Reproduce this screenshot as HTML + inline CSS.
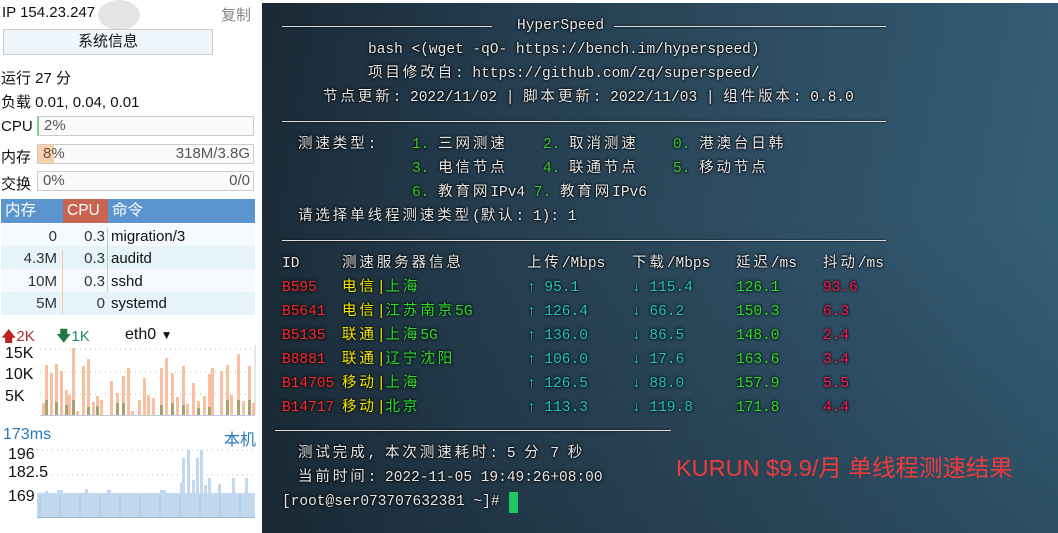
<!DOCTYPE html>
<html><head><meta charset="utf-8"><style>
*{margin:0;padding:0;box-sizing:border-box}
body{width:1058px;height:533px;overflow:hidden;background:#fff;position:relative;font-family:"Liberation Sans","Noto Sans CJK SC",sans-serif;font-size:15px;color:#111}
.a{position:absolute;white-space:nowrap}
#term{position:absolute;left:262px;top:3px;width:796px;height:530px;overflow:hidden;
background:linear-gradient(180deg,rgba(0,0,0,0) 40%,rgba(0,0,0,.18) 100%),linear-gradient(100deg,#1a2935 0%,#253e50 30%,#2d4b5f 55%,#35607a 100%)}
#term .a{font-family:"Liberation Mono","Noto Sans CJK SC",monospace;font-size:14.5px;color:#e6e6e6;text-shadow:0 0 2px #000,0 0 3px #000;line-height:20px}
.c{letter-spacing:2.9px}
.r{color:#ff2a2a!important}.y{color:#f5e800!important}.g{color:#2ee02e!important}.t{color:#1ec8c8!important}.m{color:#ff1a55!important}
.g2{color:#33d133}
.sep{position:absolute;left:20px;width:604px;height:1px;background:#ddd;box-shadow:0 0 2px #000}
.bar{position:absolute;left:37px;width:217px;height:20px;border:1px solid #ccc;background:#fafafa;font-size:15px;color:#555;line-height:18px;padding-left:5px}
</style></head><body>
<div class="a" style="left:2px;top:4px">IP 154.23.247</div>
<div class="a" style="left:98px;top:0;width:42px;height:30px;border-radius:50%;background:#e4e4e4"></div>
<div class="a" style="left:221px;top:4px;color:#888">复制</div>
<div class="a" style="left:3px;top:29px;width:210px;height:26px;background:#eef6fc;border:1px solid #ccc;text-align:center;line-height:24px">系统信息</div>
<div class="a" style="left:1px;top:67px">运行 27 分</div>
<div class="a" style="left:1px;top:91px">负载 0.01, 0.04, 0.01</div>
<div class="a" style="left:1px;top:118px">CPU</div>
<div class="bar" style="top:116px;border-left:2px solid #8c8">2%</div>
<div class="a" style="left:1px;top:146px">内存</div>
<div class="bar" style="top:144px"><span style="position:absolute;left:0;top:0;width:16px;height:18px;background:#fbcfa8"></span><span style="position:relative">8%</span><span style="position:absolute;right:3px">318M/3.8G</span></div>
<div class="a" style="left:1px;top:173px">交换</div>
<div class="bar" style="top:171px">0%<span style="position:absolute;right:3px">0/0</span></div>
<div class="a" style="left:1px;top:199px;width:254px;height:24px;background:#5b95d0"></div>
<div class="a" style="left:63px;top:199px;width:45px;height:24px;background:#c86452"></div>
<div class="a" style="left:5px;top:201px;color:#fff;font-size:15.5px;line-height:20px">内存</div>
<div class="a" style="left:67px;top:201px;color:#fff;font-size:15.5px;line-height:20px">CPU</div>
<div class="a" style="left:112px;top:201px;color:#fff;font-size:15.5px;line-height:20px">命令</div>
<div class="a" style="left:1px;top:224px;width:254px;height:22px;background:#f4fafd"></div>
<div class="a" style="left:1px;top:246px;width:254px;height:23px;background:#e6f3f9"></div>
<div class="a" style="left:1px;top:269px;width:254px;height:23px;background:#f4fafd"></div>
<div class="a" style="left:1px;top:292px;width:254px;height:23px;background:#e6f3f9"></div>
<div class="a" style="left:62px;top:250px;width:1px;height:64px;background:#f5c8a0"></div>
<div class="a" style="left:107px;top:228px;width:1px;height:64px;background:#a8d8a8"></div>
<div class="a" style="left:0;top:228px;width:57px;text-align:right;color:#333">0</div>
<div class="a" style="left:0;top:250px;width:57px;text-align:right;color:#333">4.3M</div>
<div class="a" style="left:0;top:273px;width:57px;text-align:right;color:#333">10M</div>
<div class="a" style="left:0;top:295px;width:57px;text-align:right;color:#333">5M</div>
<div class="a" style="left:60px;top:228px;width:45px;text-align:right;color:#333">0.3</div>
<div class="a" style="left:60px;top:250px;width:45px;text-align:right;color:#333">0.3</div>
<div class="a" style="left:60px;top:273px;width:45px;text-align:right;color:#333">0.3</div>
<div class="a" style="left:60px;top:295px;width:45px;text-align:right;color:#333">0</div>
<div class="a" style="left:111px;top:228px">migration/3</div>
<div class="a" style="left:111px;top:250px">auditd</div>
<div class="a" style="left:111px;top:273px">sshd</div>
<div class="a" style="left:111px;top:295px">systemd</div>
<div class="a" style="left:1px;top:326px;color:#a33"><span style="color:#b22">&#129093;</span>2K</div>
<div class="a" style="left:56px;top:326px;color:#286"><span style="color:#274">&#129095;</span>1K</div>
<div class="a" style="left:125px;top:326px;font-size:16px">eth0 <span style="font-size:12px">&#9660;</span></div>
<svg class="a" style="left:0;top:340px" width="262" height="80">
<g stroke="#bbb" stroke-dasharray="1,4"><line x1="40" y1="9" x2="255" y2="9"/><line x1="40" y1="32" x2="255" y2="32"/><line x1="40" y1="54" x2="255" y2="54"/></g>
<line x1="255" y1="5" x2="255" y2="75" stroke="#ccc"/><line x1="40" y1="75.5" x2="255" y2="75.5" stroke="#bcd"/>
<g fill="#f8c0a0">
<rect x="42" y="63" width="3" height="12"/><rect x="45" y="25" width="3" height="50"/><rect x="50" y="33" width="3" height="42"/><rect x="55" y="24" width="3" height="51"/><rect x="60" y="31" width="3" height="44"/><rect x="65" y="50" width="3" height="25"/><rect x="68" y="55" width="3" height="20"/><rect x="72" y="8" width="3" height="67"/><rect x="76" y="71" width="3" height="4"/><rect x="82" y="26" width="3" height="49"/><rect x="87" y="19" width="3" height="56"/><rect x="92" y="62" width="3" height="13"/><rect x="96" y="56" width="3" height="19"/><rect x="100" y="60" width="3" height="15"/><rect x="110" y="41" width="3" height="34"/><rect x="116" y="53" width="3" height="22"/><rect x="122" y="36" width="3" height="39"/><rect x="127" y="28" width="3" height="47"/><rect x="131" y="71" width="3" height="4"/><rect x="138" y="60" width="3" height="15"/><rect x="143" y="38" width="3" height="37"/><rect x="147" y="55" width="3" height="20"/><rect x="152" y="58" width="3" height="17"/><rect x="160" y="28" width="3" height="47"/><rect x="165" y="18" width="3" height="57"/><rect x="171" y="33" width="3" height="42"/><rect x="176" y="57" width="3" height="18"/><rect x="182" y="26" width="3" height="49"/><rect x="186" y="64" width="3" height="11"/><rect x="192" y="43" width="3" height="32"/><rect x="197" y="61" width="3" height="14"/><rect x="203" y="56" width="3" height="19"/><rect x="208" y="34" width="3" height="41"/><rect x="211" y="28" width="3" height="47"/><rect x="220" y="31" width="3" height="44"/><rect x="226" y="25" width="3" height="50"/><rect x="230" y="55" width="3" height="20"/><rect x="237" y="14" width="3" height="61"/><rect x="242" y="61" width="3" height="14"/><rect x="248" y="26" width="3" height="49"/><rect x="252" y="63" width="3" height="12"/>
</g>
<g fill="#a9a070"><rect x="45" y="60" width="3" height="15"/><rect x="55" y="62" width="3" height="13"/><rect x="65" y="65" width="3" height="10"/><rect x="72" y="60" width="3" height="15"/><rect x="87" y="67" width="3" height="8"/><rect x="96" y="66" width="3" height="9"/><rect x="116" y="63" width="3" height="12"/><rect x="122" y="63" width="3" height="12"/><rect x="160" y="65" width="3" height="10"/><rect x="171" y="63" width="3" height="12"/><rect x="182" y="65" width="3" height="10"/><rect x="197" y="68" width="3" height="7"/><rect x="208" y="67" width="3" height="8"/><rect x="226" y="60" width="3" height="15"/><rect x="237" y="60" width="3" height="15"/><rect x="248" y="60" width="3" height="15"/></g>
</svg>
<div class="a" style="left:5px;top:345px;font-size:16px">15K</div>
<div class="a" style="left:5px;top:366px;font-size:16px">10K</div>
<div class="a" style="left:5px;top:388px;font-size:16px">5K</div>
<div class="a" style="left:3px;top:426px;color:#2a78b8;font-size:16px">173ms</div>
<div class="a" style="left:224px;top:426px;color:#2a78b8;font-size:16px">本机</div>
<svg class="a" style="left:0;top:440px" width="262" height="82">
<g stroke="#bbb" stroke-dasharray="1,4"><line x1="37" y1="10" x2="255" y2="10"/><line x1="37" y1="35" x2="255" y2="35"/><line x1="37" y1="58" x2="255" y2="58"/></g>
<rect x="37" y="53" width="218" height="24" fill="#c2d8ee"/>
<g fill="#c2d8ee"><rect x="45" y="51" width="3" height="4"/><rect x="57" y="50" width="6" height="4"/><rect x="85" y="49" width="3" height="4"/><rect x="107" y="50" width="4" height="4"/><rect x="160" y="50" width="6" height="4"/><rect x="182" y="18" width="3" height="40"/><rect x="187" y="10" width="3" height="48"/><rect x="192" y="40" width="3" height="18"/><rect x="196" y="18" width="3" height="40"/><rect x="200" y="10" width="3" height="48"/><rect x="204" y="45" width="3" height="13"/><rect x="208" y="38" width="3" height="20"/><rect x="218" y="44" width="3" height="14"/><rect x="232" y="38" width="3" height="20"/><rect x="245" y="38" width="3" height="20"/><rect x="180" y="43" width="3" height="15"/></g>
<g stroke="#a8c6e6" stroke-width="1"><line x1="40" y1="55" x2="40" y2="77"/><line x1="60" y1="55" x2="60" y2="77"/><line x1="80" y1="55" x2="80" y2="77"/><line x1="100" y1="55" x2="100" y2="77"/><line x1="120" y1="55" x2="120" y2="77"/><line x1="140" y1="55" x2="140" y2="77"/><line x1="160" y1="55" x2="160" y2="77"/><line x1="180" y1="55" x2="180" y2="77"/><line x1="200" y1="55" x2="200" y2="77"/><line x1="220" y1="55" x2="220" y2="77"/><line x1="240" y1="55" x2="240" y2="77"/></g>
<line x1="37" y1="77.5" x2="255" y2="77.5" stroke="#9bb"/>
</svg>
<div class="a" style="left:8px;top:446px;font-size:16px;color:#111">196</div>
<div class="a" style="left:8px;top:464px;font-size:16px">182.5</div>
<div class="a" style="left:8px;top:488px;font-size:16px">169</div>

<div id="term">
<div class="sep" style="top:23px;width:210px"></div>
<div class="a" style="left:255px;top:13px">HyperSpeed</div>
<div class="sep" style="top:23px;left:352px;width:272px"></div>
<div class="a" style="left:106px;top:37px">bash &lt;(wget -qO- https://bench.im/hyperspeed)</div>
<div class="a" style="left:106px;top:61px"><span class="c">项目修改自</span>: https://github.com/zq/superspeed/</div>
<div class="a" style="left:61px;top:85px"><span class="c">节点更新</span>: 2022/11/02 | <span class="c">脚本更新</span>: 2022/11/03 | <span class="c">组件版本</span>: 0.8.0</div>
<div class="sep" style="top:118px"></div>
<div class="a" style="left:36px;top:132px"><span class="c">测速类型</span>:</div>
<div class="a" style="left:150px;top:132px"><span class="g2">1.</span> <span class="c">三网测速</span></div>
<div class="a" style="left:281px;top:132px"><span class="g2">2.</span> <span class="c">取消测速</span></div>
<div class="a" style="left:411px;top:132px"><span class="g2">0.</span> <span class="c">港澳台日韩</span></div>
<div class="a" style="left:150px;top:156px"><span class="g2">3.</span> <span class="c">电信节点</span></div>
<div class="a" style="left:281px;top:156px"><span class="g2">4.</span> <span class="c">联通节点</span></div>
<div class="a" style="left:411px;top:156px"><span class="g2">5.</span> <span class="c">移动节点</span></div>
<div class="a" style="left:150px;top:180px"><span class="g2">6.</span> <span class="c">教育网</span>IPv4 <span class="g2">7.</span> <span class="c">教育网</span>IPv6</div>
<div class="a" style="left:36px;top:204px"><span class="c">请选择单线程测速类型</span>(<span class="c">默认</span>: 1): 1</div>
<div class="sep" style="top:237px"></div>
<div class="a" style="left:20px;top:251px">ID</div>
<div class="a" style="left:80px;top:251px"><span class="c">测速服务器信息</span></div>
<div class="a" style="left:265px;top:251px"><span class="c">上传</span>/Mbps</div>
<div class="a" style="left:370px;top:251px"><span class="c">下载</span>/Mbps</div>
<div class="a" style="left:474px;top:251px"><span class="c">延迟</span>/ms</div>
<div class="a" style="left:561px;top:251px"><span class="c">抖动</span>/ms</div>

<div class="a r" style="left:20px;top:275px">B595</div><div class="a" style="left:80px;top:275px"><span class="y c">电信</span><span class="y">|</span><span class="g c">上海</span></div><div class="a t" style="left:265px;top:275px">↑ 95.1</div><div class="a t" style="left:370px;top:275px">↓ 115.4</div><div class="a g" style="left:474px;top:275px">126.1</div><div class="a m" style="left:561px;top:275px">93.6</div>
<div class="a r" style="left:20px;top:299px">B5641</div><div class="a" style="left:80px;top:299px"><span class="y c">电信</span><span class="y">|</span><span class="g c">江苏南京</span><span class="g">5G</span></div><div class="a t" style="left:265px;top:299px">↑ 126.4</div><div class="a t" style="left:370px;top:299px">↓ 66.2</div><div class="a g" style="left:474px;top:299px">150.3</div><div class="a m" style="left:561px;top:299px">6.3</div>
<div class="a r" style="left:20px;top:323px">B5135</div><div class="a" style="left:80px;top:323px"><span class="y c">联通</span><span class="y">|</span><span class="g c">上海</span><span class="g">5G</span></div><div class="a t" style="left:265px;top:323px">↑ 136.0</div><div class="a t" style="left:370px;top:323px">↓ 86.5</div><div class="a g" style="left:474px;top:323px">148.0</div><div class="a m" style="left:561px;top:323px">2.4</div>
<div class="a r" style="left:20px;top:347px">B8881</div><div class="a" style="left:80px;top:347px"><span class="y c">联通</span><span class="y">|</span><span class="g c">辽宁沈阳</span></div><div class="a t" style="left:265px;top:347px">↑ 106.0</div><div class="a t" style="left:370px;top:347px">↓ 17.6</div><div class="a g" style="left:474px;top:347px">163.6</div><div class="a m" style="left:561px;top:347px">3.4</div>
<div class="a r" style="left:20px;top:371px">B14705</div><div class="a" style="left:80px;top:371px"><span class="y c">移动</span><span class="y">|</span><span class="g c">上海</span></div><div class="a t" style="left:265px;top:371px">↑ 126.5</div><div class="a t" style="left:370px;top:371px">↓ 88.0</div><div class="a g" style="left:474px;top:371px">157.9</div><div class="a m" style="left:561px;top:371px">5.5</div>
<div class="a r" style="left:20px;top:395px">B14717</div><div class="a" style="left:80px;top:395px"><span class="y c">移动</span><span class="y">|</span><span class="g c">北京</span></div><div class="a t" style="left:265px;top:395px">↑ 113.3</div><div class="a t" style="left:370px;top:395px">↓ 119.8</div><div class="a g" style="left:474px;top:395px">171.8</div><div class="a m" style="left:561px;top:395px">4.4</div>
<div class="sep" style="top:427px;left:13px;width:396px"></div>
<div class="a" style="left:36px;top:441px"><span class="c">测试完成</span>, <span class="c">本次测速耗时</span>: 5 <span class="c">分</span> 7 <span class="c">秒</span></div>
<div class="a" style="left:36px;top:465px"><span class="c">当前时间</span>: 2022-11-05 19:49:26+08:00</div>
<div class="a" style="left:20px;top:489px">[root@ser073707632381 ~]#</div>
<div class="a" style="left:247px;top:489px;width:9px;height:21px;background:#1ec860"></div>
<div class="a" style="left:414px;top:455px;font-family:'Liberation Sans','Noto Sans CJK SC',sans-serif;font-size:23.5px;color:#f03a3a;text-shadow:none">KURUN $9.9/月 单线程测速结果</div>
</div>
</body></html>
